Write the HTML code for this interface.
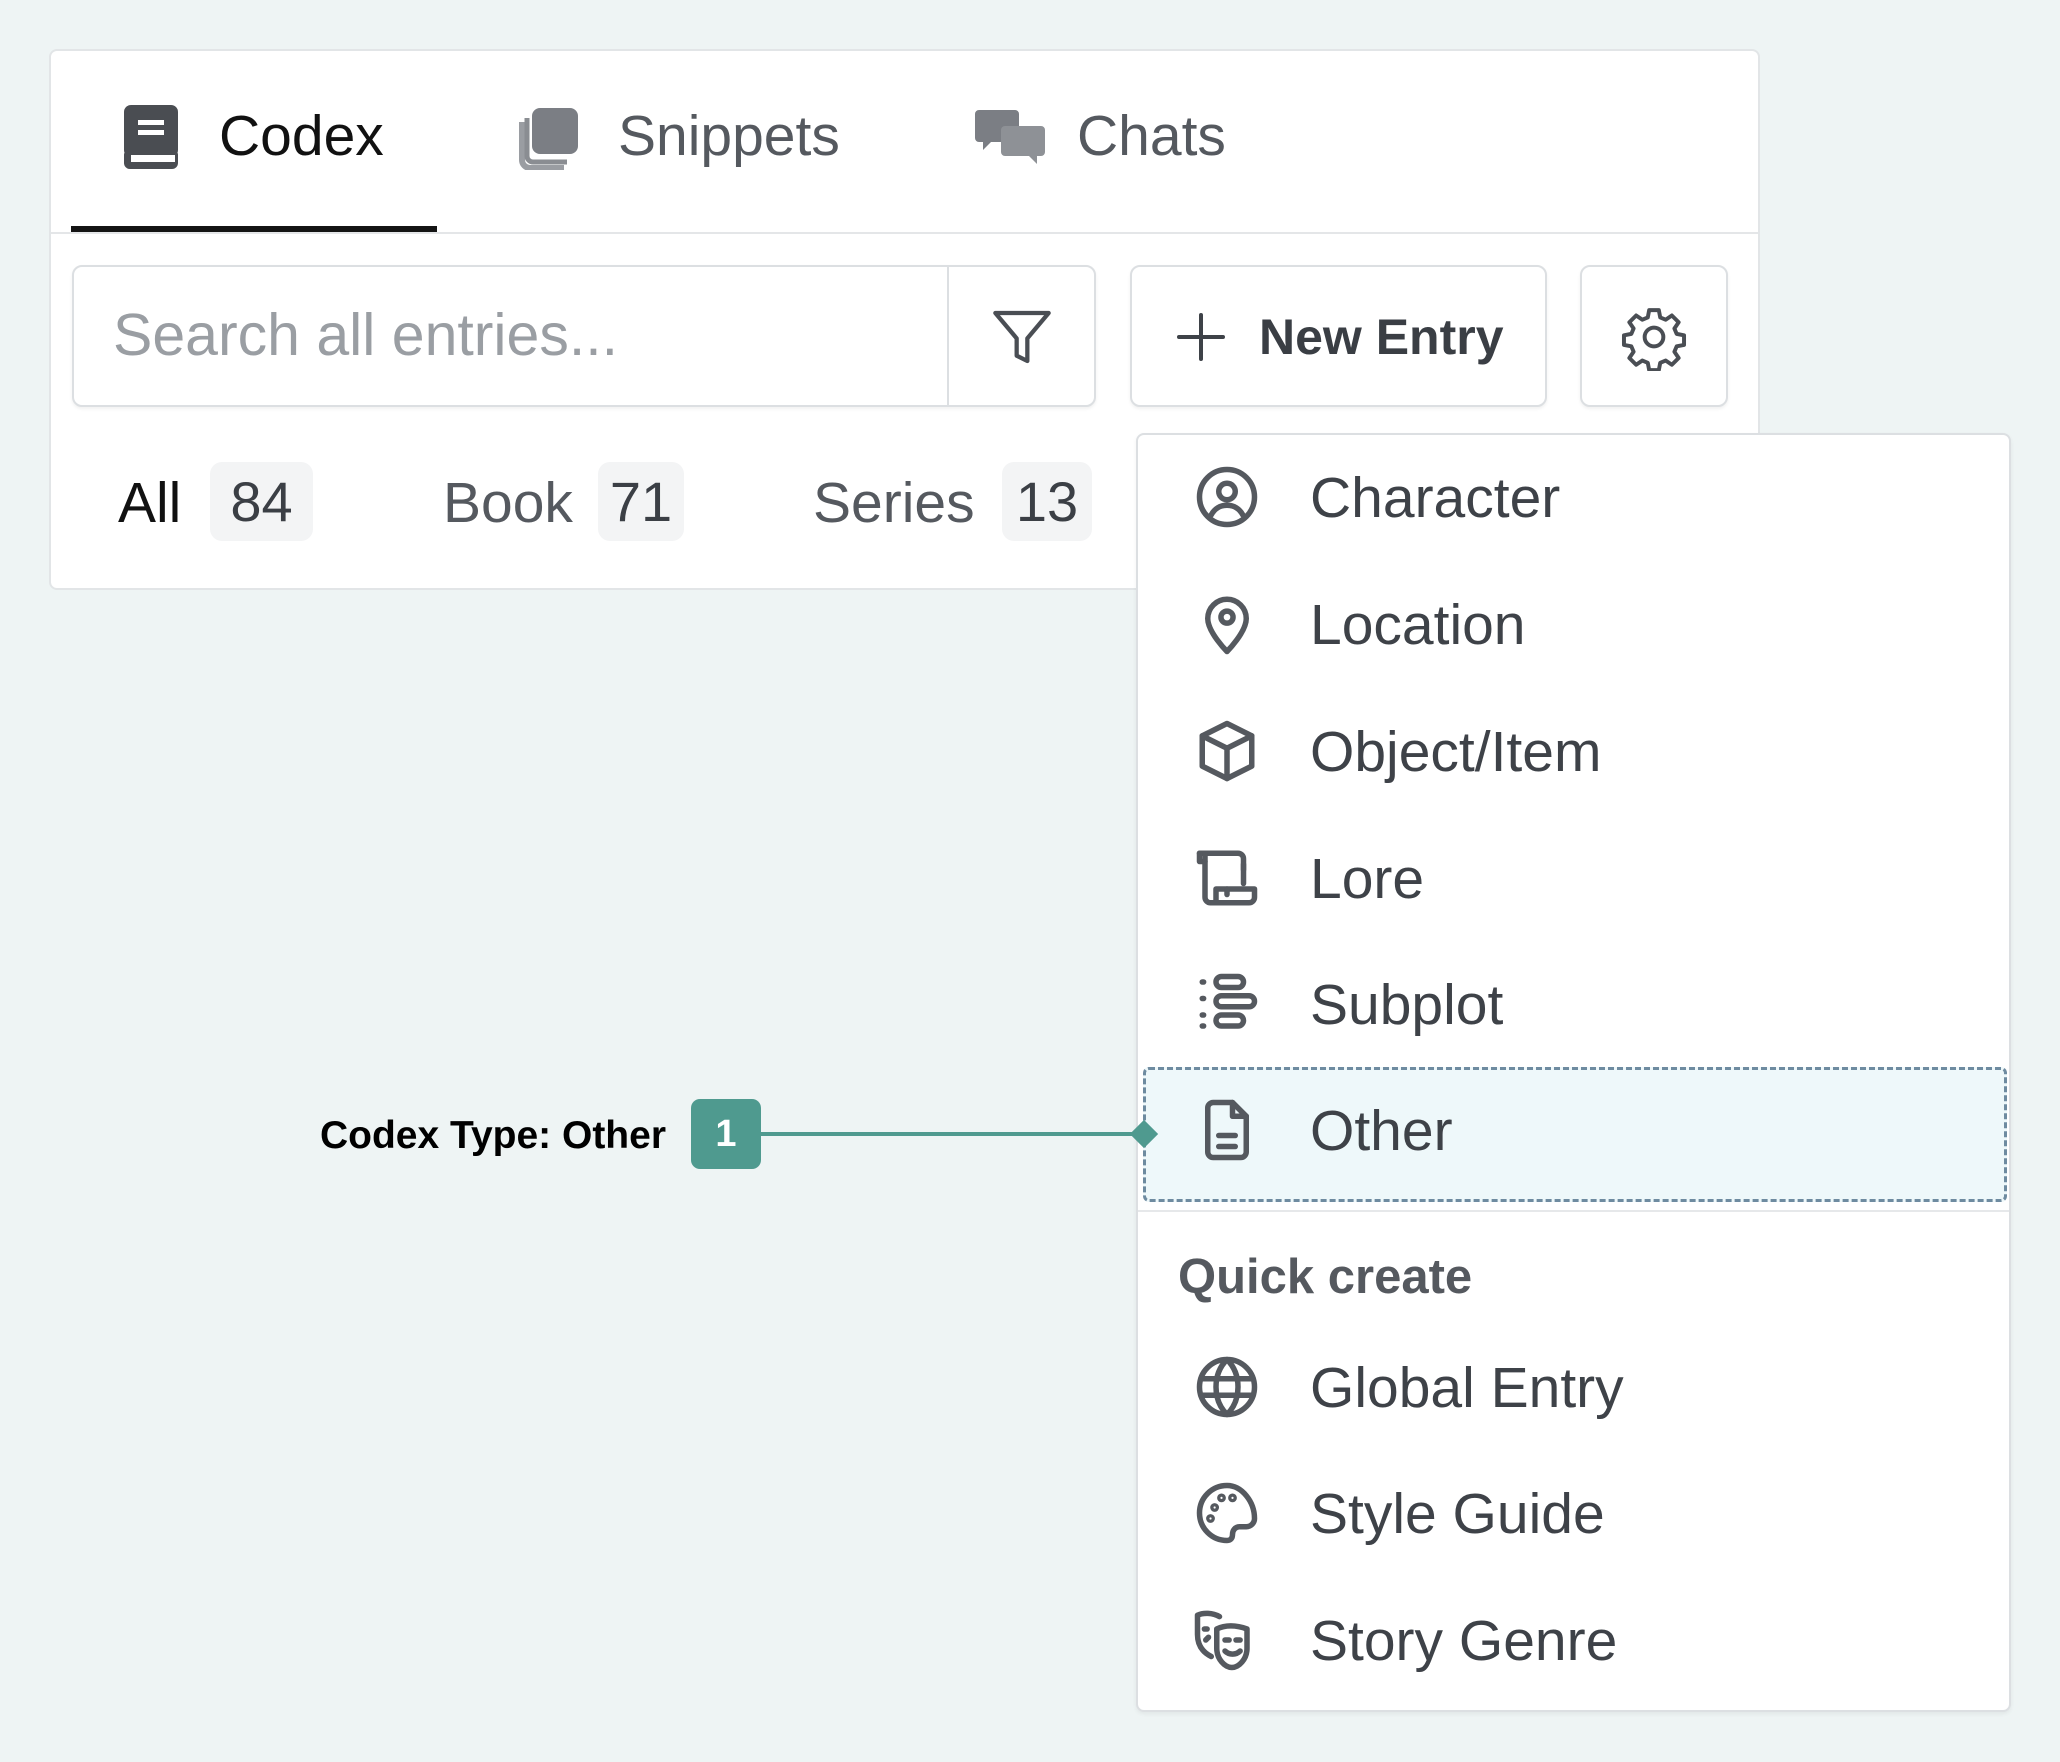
<!DOCTYPE html>
<html><head><meta charset="utf-8"><style>
*{margin:0;padding:0;box-sizing:border-box}
body{width:2060px;height:1762px;background:#eef4f4;position:relative;overflow:hidden;font-family:"Liberation Sans",sans-serif}
.a{position:absolute}
.card{left:49px;top:49px;width:1711px;height:541px;background:#fff;border:2px solid #e2e5e7;border-radius:8px}
.t{position:absolute;font-size:56px;line-height:1;white-space:nowrap}
.box{position:absolute;background:#fff;border:2px solid #dcdfe2;border-radius:10px;box-shadow:0 2px 3px rgba(0,0,0,.06)}
.badge{position:absolute;background:#f3f4f5;border-radius:12px;color:#3b3f45;font-size:56px;text-align:center;line-height:79px}
.menu{left:1136px;top:433px;width:875px;height:1279px;background:#fff;border:2px solid #dcdfe2;border-radius:8px;box-shadow:0 2px 4px rgba(0,0,0,.06)}
.it{position:absolute;left:1310px;font-size:57px;color:#3e4248;line-height:1;white-space:nowrap}
svg.ic{position:absolute;width:66px;height:66px;fill:none;stroke:#55595f;stroke-width:2;stroke-linecap:round;stroke-linejoin:round}
</style></head><body>
<div class="a card"></div>
<!-- tabs -->
<svg class="a" style="left:122px;top:105px" width="58" height="64" viewBox="0 0 58 64"><rect x="2" y="0" width="54" height="52" rx="7" fill="#4a4d52"/><rect x="2" y="44" width="54" height="20" rx="6" fill="#4a4d52"/><rect x="9" y="50" width="44" height="7" fill="#fff"/><rect x="16" y="15" width="26" height="5" fill="#fff"/><rect x="16" y="25" width="26" height="5" fill="#fff"/></svg>
<div class="t" style="left:219px;top:108px;color:#111;font-size:57px">Codex</div>
<svg class="a" style="left:518px;top:108px" width="64" height="62" viewBox="0 0 64 62"><rect x="14" y="0" width="46" height="46" rx="8" fill="#7b7e84"/><path d="M4 14v38a8 8 0 0 0 8 8h34" stroke="#9a9da2" stroke-width="6" fill="none"/><path d="M9 10v38a6 6 0 0 0 6 6h34" stroke="#8a8d92" stroke-width="5" fill="none"/></svg>
<div class="t" style="left:618px;top:108px;color:#55595f;font-size:57px">Snippets</div>
<svg class="a" style="left:975px;top:110px" width="72" height="56" viewBox="0 0 72 56"><path d="M4 0h36a4 4 0 0 1 4 4v24a4 4 0 0 1-4 4H16l-8 8v-8H4a4 4 0 0 1-4-4V4a4 4 0 0 1 4-4z" fill="#7b7e84"/><path d="M30 16h36a4 4 0 0 1 4 4v22a4 4 0 0 1-4 4h-4v8l-8-8H30a4 4 0 0 1-4-4V20a4 4 0 0 1 4-4z" fill="#8e9196"/></svg>
<div class="t" style="left:1077px;top:108px;color:#55595f;font-size:57px">Chats</div>
<div class="a" style="left:51px;top:232px;width:1707px;height:2px;background:#e4e6e8"></div>
<div class="a" style="left:71px;top:226px;width:366px;height:6px;background:#141414"></div>
<!-- search -->
<div class="box" style="left:72px;top:265px;width:1024px;height:142px"></div>
<div class="a" style="left:947px;top:267px;width:2px;height:138px;background:#dcdfe2"></div>
<div class="t" style="left:113px;top:306px;font-size:59px;color:#9a9ea3">Search all entries...</div>
<svg class="a" style="left:990px;top:305px" width="64" height="64" viewBox="0 0 24 24" fill="none" stroke="#4a4e54" stroke-width="1.6" stroke-linejoin="round"><path d="M2 3h20l-8 9.5V21l-4-2v-6.5z"/></svg>
<div class="box" style="left:1130px;top:265px;width:417px;height:142px"></div>
<svg class="a" style="left:1173px;top:309px" width="56" height="56" viewBox="0 0 56 56" stroke="#3e4248" stroke-width="4" stroke-linecap="round"><path d="M28 6v44M6 28h44"/></svg>
<div class="t" style="left:1259px;top:312px;font-size:50px;font-weight:bold;color:#3a3e44">New Entry</div>
<div class="box" style="left:1580px;top:265px;width:148px;height:142px"></div>
<svg class="a" style="left:1620px;top:303px" width="68" height="68" viewBox="0 0 24 24" fill="none" stroke="#4a4e54" stroke-width="1.4" stroke-linejoin="round"><path d="M10.3 2.5h3.4l.5 2.6 1.9.8 2.2-1.5 2.4 2.4-1.5 2.2.8 1.9 2.6.5v3.4l-2.6.5-.8 1.9 1.5 2.2-2.4 2.4-2.2-1.5-1.9.8-.5 2.6h-3.4l-.5-2.6-1.9-.8-2.2 1.5-2.4-2.4 1.5-2.2-.8-1.9-2.6-.5v-3.4l2.6-.5.8-1.9-1.5-2.2 2.4-2.4 2.2 1.5 1.9-.8z"/><circle cx="12" cy="12" r="3.3"/></svg>
<!-- filters -->
<div class="t" style="left:118px;top:475px;color:#111;font-size:57px">All</div>
<div class="badge" style="left:210px;top:462px;width:103px;height:79px">84</div>
<div class="t" style="left:443px;top:475px;color:#55595f;font-size:57px">Book</div>
<div class="badge" style="left:598px;top:462px;width:86px;height:79px">71</div>
<div class="t" style="left:813px;top:475px;color:#55595f;font-size:57px">Series</div>
<div class="badge" style="left:1002px;top:462px;width:90px;height:79px">13</div>
<!-- menu -->
<div class="a menu"></div>
<div class="a" style="left:1143px;top:1067px;width:864px;height:135px;background:#eef8fa;border:3px dashed #6e8ba0;border-radius:6px"></div>
<div class="a" style="left:1138px;top:1210px;width:871px;height:2px;background:#e6e8ea"></div>
<!-- icons -->
<svg class="ic" style="left:1194px;top:464px" viewBox="0 0 24 24"><circle cx="12" cy="12" r="10"/><circle cx="12" cy="10" r="3"/><path d="M6.2 18.6c1.2-2.3 3.3-3.6 5.8-3.6s4.6 1.3 5.8 3.6"/></svg>
<svg class="ic" style="left:1194px;top:591px" viewBox="0 0 24 24"><path d="M12 22s-7-7-7-12a7 7 0 0 1 14 0c0 5-7 12-7 12z"/><circle cx="12" cy="9.5" r="2.2"/></svg>
<svg class="ic" style="left:1194px;top:718px" viewBox="0 0 24 24"><path d="M12 2l9 4.5v11L12 22l-9-4.5v-11z"/><path d="M3 6.5l9 4.5 9-4.5M12 11v11"/></svg>
<svg class="ic" style="left:1194px;top:845px" viewBox="0 0 24 24"><path d="M2 3h14a2 2 0 0 1 2 2v9"/><path d="M2 3v3h2"/><path d="M4 3v16a2 2 0 0 0 2 2h14a2 2 0 0 0 2-2v-3H8v5"/><path d="M18 7v2M12 16v2"/></svg>
<svg class="ic" style="left:1194px;top:971px" viewBox="0 0 24 24"><path d="M3 4h.5M3 10h.5M3 16h.5M3 20h.5"/><rect x="8" y="2" width="10" height="4" rx="2"/><rect x="8" y="9" width="14" height="4" rx="2"/><rect x="8" y="16" width="10" height="4" rx="2"/></svg>
<svg class="ic" style="left:1194px;top:1097px" viewBox="0 0 24 24"><path d="M14 2H7a2 2 0 0 0-2 2v16a2 2 0 0 0 2 2h10a2 2 0 0 0 2-2V7z"/><path d="M14 2v5h5M9 14h6M9 18h6"/></svg>
<svg class="ic" style="left:1194px;top:1354px" viewBox="0 0 24 24"><circle cx="12" cy="12" r="10"/><path d="M12 2c-3 3-4 6.5-4 10s1 7 4 10c3-3 4-6.5 4-10s-1-7-4-10zM2.5 9h19M2.5 15h19"/></svg>
<svg class="ic" style="left:1194px;top:1480px" viewBox="0 0 24 24"><path d="M12 2a10 10 0 0 0 0 20c1.5 0 2-1 2-2.2 0-1.5 1-2.8 2.5-2.8H19a3 3 0 0 0 3-3c0-6-4.5-12-10-12z"/><circle cx="7.5" cy="10" r=".6"/><circle cx="10" cy="6.5" r=".6"/><circle cx="14" cy="6.5" r=".6"/><circle cx="6" cy="14" r=".6"/></svg>
<svg class="ic" style="left:1192px;top:1607px" viewBox="0 0 24 24"><path d="M10 3.5C7.5 2 4 2 2 3v7c0 4 2 6.5 5 8"/><path d="M9 8c3-1.5 7-1.5 11 0v7c0 4-3 7-5.5 7S9 19 9 15z"/><path d="M12 12h1.5M16 12h1.5M12 16c1.5 1.5 4 1.5 5.5 0M4.5 8h1M5 12l1-1"/></svg>
<!-- labels -->
<div class="it" style="left:1310px;top:470px">Character</div>
<div class="it" style="top:597px">Location</div>
<div class="it" style="top:724px">Object/Item</div>
<div class="it" style="top:851px">Lore</div>
<div class="it" style="top:977px">Subplot</div>
<div class="it" style="top:1103px">Other</div>
<div class="t" style="left:1178px;top:1253px;font-size:49px;font-weight:bold;color:#55595f">Quick create</div>
<div class="it" style="top:1360px">Global Entry</div>
<div class="it" style="top:1486px">Style Guide</div>
<div class="it" style="top:1613px">Story Genre</div>
<!-- annotation -->
<div class="t" style="left:320px;top:1116px;font-size:39px;font-weight:bold;color:#000">Codex Type: Other</div>
<div class="a" style="left:691px;top:1099px;width:70px;height:70px;background:#4f9a8f;border-radius:9px;color:#fff;font-size:38px;font-weight:bold;text-align:center;line-height:70px">1</div>
<div class="a" style="left:761px;top:1132px;width:383px;height:4px;background:#4f9a8f"></div>
<div class="a" style="left:1134px;top:1124px;width:20px;height:20px;background:#4f9a8f;transform:rotate(45deg)"></div>
</body></html>
